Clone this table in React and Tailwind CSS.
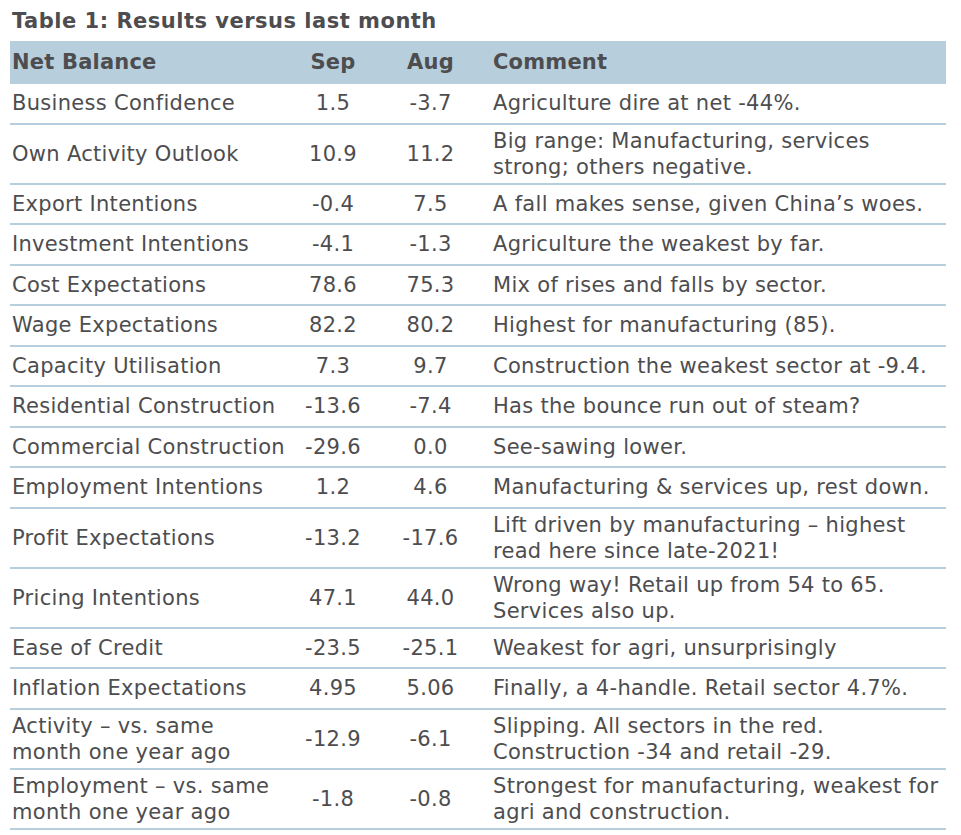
const rows = [
  { label: ["Business Confidence"], sep: "1.5", aug: "-3.7", comment: ["Agriculture dire at net -44%."] },
  { label: ["Own Activity Outlook"], sep: "10.9", aug: "11.2", comment: ["Big range: Manufacturing, services", "strong; others negative."] },
  { label: ["Export Intentions"], sep: "-0.4", aug: "7.5", comment: ["A fall makes sense, given China\u2019s woes."] },
  { label: ["Investment Intentions"], sep: "-4.1", aug: "-1.3", comment: ["Agriculture the weakest by far."] },
  { label: ["Cost Expectations"], sep: "78.6", aug: "75.3", comment: ["Mix of rises and falls by sector."] },
  { label: ["Wage Expectations"], sep: "82.2", aug: "80.2", comment: ["Highest for manufacturing (85)."] },
  { label: ["Capacity Utilisation"], sep: "7.3", aug: "9.7", comment: ["Construction the weakest sector at -9.4."] },
  { label: ["Residential Construction"], sep: "-13.6", aug: "-7.4", comment: ["Has the bounce run out of steam?"] },
  { label: ["Commercial Construction"], sep: "-29.6", aug: "0.0", comment: ["See-sawing lower."] },
  { label: ["Employment Intentions"], sep: "1.2", aug: "4.6", comment: ["Manufacturing & services up, rest down."] },
  { label: ["Profit Expectations"], sep: "-13.2", aug: "-17.6", comment: ["Lift driven by manufacturing \u2013 highest", "read here since late-2021!"] },
  { label: ["Pricing Intentions"], sep: "47.1", aug: "44.0", comment: ["Wrong way! Retail up from 54 to 65.", "Services also up."] },
  { label: ["Ease of Credit"], sep: "-23.5", aug: "-25.1", comment: ["Weakest for agri, unsurprisingly"] },
  { label: ["Inflation Expectations"], sep: "4.95", aug: "5.06", comment: ["Finally, a 4-handle. Retail sector 4.7%."] },
  { label: ["Activity \u2013 vs. same", "month one year ago"], sep: "-12.9", aug: "-6.1", comment: ["Slipping. All sectors in the red.", "Construction -34 and retail -29."] },
  { label: ["Employment \u2013 vs. same", "month one year ago"], sep: "-1.8", aug: "-0.8", comment: ["Strongest for manufacturing, weakest for", "agri and construction."] },
];

function Lines({ lines }) {
  return lines.map((l, i) => (
    <span key={i} className="block whitespace-nowrap">
      {l}
    </span>
  ));
}

export default function App() {
  return (
    <div
      className="w-[961px] h-[835px] bg-white text-[#4d4d4f] overflow-hidden"
      style={{ fontFamily: '"DejaVu Sans", Verdana, sans-serif' }}
    >
      <div className="pt-[8px] pl-[12px] mb-[7px] text-[21px] leading-[26px] font-bold tracking-[0.5px]">
        Table 1: Results versus last month
      </div>

      <div className="ml-[10px] w-[936px]">
        {/* header */}
        <div className="grid grid-cols-[278px_90px_105px_1fr] h-[43px] items-center bg-[#b7cedc] font-bold text-[21px] tracking-[0.2px]">
          <div className="pl-[2px]">Net Balance</div>
          <div className="text-center">Sep</div>
          <div className="text-center">Aug</div>
          <div className="pl-[10px]">Comment</div>
        </div>

        {rows.map((r, i) => (
          <div
            key={i}
            className="grid grid-cols-[278px_90px_105px_1fr] min-h-[40.5px] items-center py-[3px] border-b-2 border-[#b7cedc] text-[21px] leading-[26px] tracking-[0.3px]"
          >
            <div className="pl-[2px]">
              <Lines lines={r.label} />
            </div>
            <div className="text-center">{r.sep}</div>
            <div className="text-center">{r.aug}</div>
            <div className="pl-[10px]">
              <Lines lines={r.comment} />
            </div>
          </div>
        ))}
      </div>
    </div>
  );
}
